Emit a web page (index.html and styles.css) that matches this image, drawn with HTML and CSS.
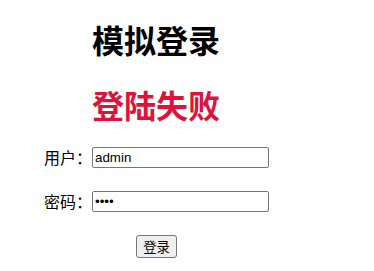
FILE: index.html
```html
<!DOCTYPE html>
<html lang="zh-CN">
<head>
<meta charset="utf-8">
<title>模拟登录</title>
<link rel="stylesheet" href="styles.css">
</head>
<body>
<main class="page">
  <h1 class="title">模拟登录</h1>
  <h1 class="status">登陆失败</h1>
  <form class="login">
    <label class="field-label" for="user">用户：</label>
    <input class="field-input" id="user" type="text" value="admin">
    <label class="field-label" for="pass">密码：</label>
    <input class="field-input" id="pass" type="password" value="1234">
    <div class="actions"><button class="submit" type="button">登录</button></div>
  </form>
</main>
</body>
</html>
```

FILE: styles.css
```css
html, body {
  margin: 0;
  padding: 0;
  background: #ffffff;
}

body {
  font-family: "Liberation Sans", "Noto Sans CJK SC", sans-serif;
  color: #000000;
}

.page {
  padding-top: 19px;
}

.title,
.status {
  margin: 0 0 0 92px;
  font-family: "Noto Sans CJK SC", sans-serif;
  font-size: 32px;
  font-weight: 700;
  line-height: 40px;
}

.status {
  margin-top: 25px;
  color: #dc143c;
}

.login {
  margin: 23px 0 0 44px;
  display: grid;
  grid-template-columns: auto 177px;
  grid-template-rows: 21px 21px 23px;
  row-gap: 23px;
  align-items: center;
  width: max-content;
}

.field-label {
  font-family: "Noto Sans CJK SC", sans-serif;
  font-size: 16px;
  line-height: 21px;
  text-align: right;
  color: #000000;
}

.field-input {
  box-sizing: border-box;
  width: 177px;
  height: 21px;
  margin: 0;
  padding: 1px 2px;
  border: 1px solid #767676;
  border-radius: 2px;
  font-family: "Liberation Sans", sans-serif;
  font-size: 13.33px;
  color: #000000;
  background: #ffffff;
}

.actions {
  grid-column: 1 / -1;
  display: flex;
  justify-content: center;
  margin-top: -1px;
}

.submit {
  box-sizing: border-box;
  width: 41px;
  height: 23px;
  margin: 0;
  padding: 0;
  border: 1px solid #767676;
  border-radius: 3px;
  background: #efefef;
  font-family: "Noto Sans CJK SC", sans-serif;
  font-size: 13.33px;
  line-height: 19px;
  color: #000000;
}
```
